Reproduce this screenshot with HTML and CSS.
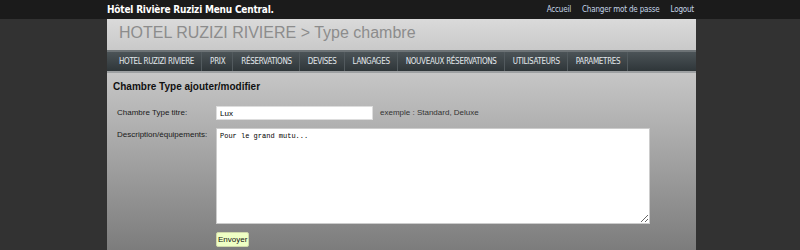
FILE: index.html
```html
<!doctype html>
<html lang="fr">
  <head>
    <meta charset="UTF-8" />
    <title>Type chambre</title>
    <link rel="stylesheet" href="styles.css">
  </head>
  <body>
    <div class="topbar">
      <div class="topbar-inner">
        <span class="brand">Hôtel Rivière Ruzizi Menu Central.</span>
        <div class="toplinks">
          <a href="#">Accueil</a>
          <a href="#">Changer mot de passe</a>
          <a href="#">Logout</a>
        </div>
      </div>
    </div>

    <div class="page">
      <div class="header">
        <h1>HOTEL RUZIZI RIVIERE &gt; Type chambre</h1>
      </div>
      <ul class="nav">
        <li><a href="#">HOTEL RUZIZI RIVIERE</a></li>
        <li><a href="#">PRIX</a></li>
        <li><a href="#">RÉSERVATIONS</a></li>
        <li><a href="#">DEVISES</a></li>
        <li><a href="#">LANGAGES</a></li>
        <li><a href="#">NOUVEAUX RÉSERVATIONS</a></li>
        <li><a href="#">UTILISATEURS</a></li>
        <li><a href="#">PARAMETRES</a></li>
      </ul>

      <div class="content">
        <h2>Chambre Type ajouter/modifier</h2>
        <form class="form">
          <div class="row">
            <label for="titre">Chambre Type titre:</label>
            <input type="text" id="titre" value="Lux" />
            <span class="hint">exemple : Standard, Deluxe</span>
          </div>
          <div class="row">
            <label for="desc">Description/équipements:</label>
            <textarea id="desc">Pour le grand mutu...</textarea>
          </div>
          <div class="row">
            <span class="spacer"></span>
            <button type="button">Envoyer</button>
          </div>
        </form>
      </div>
    </div>
  </body>
</html>
```

FILE: styles.css
```css
html,
body {
  margin: 0;
  padding: 0;
  height: 100%;
}
body {
  background: #323232;
  font-family: "Liberation Sans", Arial, sans-serif;
  overflow: hidden;
}
.topbar {
  background: #1b1b1b;
  height: 19px;
}
.topbar-inner {
  width: 589px;
  margin-left: 107px;
  display: flex;
  justify-content: space-between;
  align-items: center;
  height: 19px;
}
.brand {
  color: #fff;
  font-family: "DejaVu Sans Condensed", "DejaVu Sans", sans-serif;
  font-weight: bold;
  font-size: 10px;
  letter-spacing: -0.2px;
}
.toplinks {
  display: flex;
  gap: 11px;
  padding-right: 2px;
}
.toplinks a {
  color: #c4d4e6;
  text-decoration: none;
  font-size: 8px;
  font-family: "DejaVu Sans Condensed", "DejaVu Sans", sans-serif;
  letter-spacing: -0.2px;
}
.page {
  width: 589px;
  margin-left: 107px;
  height: calc(100% - 19px);
  display: flex;
  flex-direction: column;
}
.header {
  background: linear-gradient(#dadada, #c9c9c9);
  height: 31px;
  flex: none;
}
.header h1 {
  margin: 0;
  padding: 5px 0 0 12px;
  font-weight: normal;
  font-size: 16px;
  color: #8c8c8c;
}
.nav {
  list-style: none;
  margin: 0;
  padding: 0 0 0 4px;
  display: flex;
  height: 19px;
  flex: none;
  border-top: 2px solid #6d7376;
  border-bottom: 2px solid #9da0a2;
  background: linear-gradient(#4b5357, #2f3639);
}
.nav li {
  border-right: 1px solid #525a5e;
  display: flex;
  align-items: center;
}
.nav a {
  color: #e2e8ec;
  text-decoration: none;
  white-space: nowrap;
  font-family: "DejaVu Sans Condensed", "DejaVu Sans", sans-serif;
  font-size: 8px;
  letter-spacing: -0.3px;
  padding: 0 7px 0 8px;
}
.content {
  flex: 1;
  background: linear-gradient(#c6c6c6, #7a7a7a);
  padding: 8px 6px 0;
}
.content h2 {
  margin: 0 0 14px;
  font-size: 10px;
  color: #111;
}
.row {
  display: flex;
  align-items: flex-start;
  margin-bottom: 8px;
  padding-left: 4px;
}
label,
.spacer {
  width: 99px;
  flex: none;
  font-size: 8px;
  color: #1a1a1a;
  padding-top: 2px;
}
input {
  width: 157px;
  height: 14px;
  box-sizing: border-box;
  border: 1px solid #ddd;
  padding: 0 3px;
  font-size: 8px;
  font-family: "Liberation Sans", Arial, sans-serif;
}
.hint {
  font-size: 8px;
  color: #333;
  margin-left: 7px;
  padding-top: 2px;
}
textarea {
  width: 434px;
  height: 96px;
  box-sizing: border-box;
  border: 1px solid #ccc;
  padding: 3px;
  font-family: "Liberation Mono", monospace;
  font-size: 7px;
  resize: both;
}
button {
  background: #efffc4;
  border: 1px solid #cfd8aa;
  border-radius: 2px;
  font-size: 8px;
  font-family: "Liberation Sans", Arial, sans-serif;
  padding: 2px 1px;
  color: #111;
}
```
